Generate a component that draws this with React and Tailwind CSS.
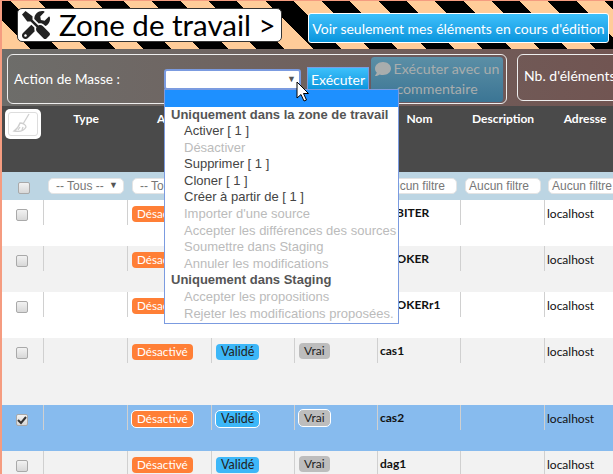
import React from 'react';
import { FaTools, FaComment } from 'react-icons/fa';

const gridCols = 'grid grid-cols-[42px_84px_84px_83px_83px_83px_84px_80px]';

const Broom = () => (
    <svg width="26" height="24" viewBox="0 0 26 24" fill="none" stroke="#cfcfcf" strokeWidth="1.3">
        <path d="M19 2 L13 12" />
        <path d="M10 11 C13 11 16 13 16 15 C14 19 9 20 4 19 C7 17 9 14 10 11 Z" />
        <path d="M8 18 L10 15 M12 18 L13 15" />
    </svg>
);

const Checkbox = ({ checked }) => (
    <div className="w-[12px] h-[12px] rounded-[2px] border border-[#a9a9a9] bg-gradient-to-b from-[#f2f2f2] to-[#d8d8d8] flex items-center justify-center">
        {checked && (
            <svg width="10" height="10" viewBox="0 0 10 10">
                <path d="M1 5 L4 8 L9 2" fill="none" stroke="#333" strokeWidth="2" />
            </svg>
        )}
    </div>
);

const Badge = ({ className, children, outlined }) => (
    <span className={`inline-block h-[16px] leading-[15px] px-[5px] rounded-[4px] ${className} ${outlined ? 'outline-1 outline-white' : ''}`}>
        {children}
    </span>
);

const Row = ({ bg, height, name, checked }) => (
    <div className={`${gridCols} ${bg} ${height} text-[12px] text-[#111]`}>
        <div className="h-[25px] border-r border-[#d0d0d0] flex justify-center pt-[9px] pr-[2px]">
            <Checkbox checked={checked} />
        </div>
        <div className="h-[25px] border-r border-[#d0d0d0]"></div>
        <div className="h-[25px] border-r border-[#d0d0d0] pl-[4px] pt-[6px] leading-none">
            <Badge className="bg-[#ff7f36] text-white text-[11.7px]" outlined={checked}>Désactivé</Badge>
        </div>
        <div className="h-[25px] border-r border-[#d0d0d0] pl-[4px] pt-[6px] leading-none">
            <Badge className="bg-[#3db7f8] text-[#222] text-[12.5px]" outlined={checked}>Validé</Badge>
        </div>
        <div className="h-[25px] border-r border-[#d0d0d0] pl-[4px] pt-[5px] leading-none">
            <Badge className="bg-[#bdbdbd] text-[#222] text-[12px]" outlined={checked}>Vrai</Badge>
        </div>
        <div className="h-[25px] border-r border-[#d0d0d0] pl-[2px] pt-[4px] font-bold text-[12px]">{name}</div>
        <div className="h-[25px] border-r border-[#d0d0d0]"></div>
        <div className="h-[25px] pl-[2px] pt-[5px]">localhost</div>
    </div>
);

const Filter = ({ label, arrow }) => (
    <div className="w-[76px] h-[16px] bg-white rounded-[5px] border border-[#e4e4e4] flex items-center justify-between pl-[7px] pr-[3px] text-[12px] text-[#777] whitespace-nowrap overflow-hidden font-['Liberation_Sans',sans-serif]">
        <span className={arrow ? '' : '-ml-[4px]'}>{label}</span>
        {arrow && <span className="text-[9px] text-[#555] pr-[2px]">▼</span>}
    </div>
);

const MenuItem = ({ on, children }) => (
    <div className={`h-[16.6px] leading-[16.6px] pl-[19px] whitespace-nowrap ${on ? 'text-[#444]' : 'text-[#bbb]'}`}>{children}</div>
);

const MenuGroup = ({ children }) => (
    <div className="h-[16.6px] leading-[16.6px] pl-[6px] font-bold text-[#555] whitespace-nowrap">{children}</div>
);

const App = () => {
    return (
        <div className="relative w-[613px] h-[474px] overflow-hidden bg-white border-l-2 border-t border-[#f59c80] font-['Lato',sans-serif]">
            {/* bandeau */}
            <div className="h-[48px] flex items-start bg-[repeating-linear-gradient(45deg,#ffcc99_0,#ffcc99_20px,#000_20px,#000_40px)]">
                <div className="flex items-center mt-[7px] ml-[15px] h-[34px] w-[265px] shrink-0 bg-white border border-[#333] rounded-[5px] pl-[4px] text-[29.5px] text-black">
                    <FaTools className="text-[#222] text-[28px] mr-[9px] shrink-0" />
                    <span className="whitespace-nowrap">Zone de travail &gt;</span>
                </div>
                <div className="mt-[12px] ml-[26px] h-[30px] w-[301px] shrink-0 rounded-[3px] border border-white bg-gradient-to-b from-[#3cc0fb] to-[#0495dd] text-white text-[14px] flex items-center justify-center whitespace-nowrap">
                    Voir seulement mes éléments en cours d'édition
                </div>
            </div>

            {/* actions de masse */}
            <div className="h-[57px] flex items-start pt-[5px] pl-[5px] bg-gradient-to-r from-[#6d6d6a] to-[#715552] text-white">
                <div className="flex items-center w-[500px] shrink-0 h-[50px] border border-[#eee] rounded-[6px] pl-[6px]">
                    <span className="w-[150px] shrink-0 text-[13.6px]">Action de Masse :</span>
                    <div className="w-[137px] shrink-0 h-[21px] bg-white border-2 border-[#7b9be0] rounded-[3px] flex items-center justify-end pr-[3px] text-[9px] text-[#555]">▼</div>
                    <div className="ml-[6px] w-[62px] shrink-0 h-[24px] bg-gradient-to-b from-[#3cc0fb] to-[#0495dd] border border-[#7b9be0] text-[14px] flex items-center justify-center">Exécuter</div>
                    <div className="ml-[1px] w-[134px] shrink-0 h-[47px] pt-[2px] rounded-[4px] border border-[#6b5a60] bg-gradient-to-b from-[#5b8fa6] to-[#3b7594] text-[#a9adad] text-[14.2px] leading-[20px] text-center">
                        <FaComment className="inline text-[16px] mr-[3px] mb-[2px]" />Exécuter avec un commentaire
                    </div>
                </div>
                <div className="ml-[10px] w-[200px] h-[47px] shrink-0 border border-[#eee] rounded-[6px] pl-[6px] pt-[10px] text-[14px] whitespace-nowrap">Nb. d'éléments</div>
            </div>

            {/* en-tete du tableau */}
            <div className={`${gridCols} h-[66px] bg-[#4a4a4a] text-white text-[12px] font-bold pt-[3px]`}>
                <div className="pl-[3px]">
                    <div className="w-[36px] h-[30px] bg-white rounded-[5px] p-[3px]">
                        <div className="w-full h-full border border-[#ddd] rounded-[3px] flex items-center justify-center"><Broom /></div>
                    </div>
                </div>
                <div className="text-center mt-[1px]">Type</div>
                <div className="text-center mt-[1px]">Actif</div>
                <div></div>
                <div></div>
                <div className="text-center mt-[1px]">Nom</div>
                <div className="text-center mt-[1px]">Description</div>
                <div className="text-center mt-[1px]">Adresse</div>
            </div>

            {/* filtres */}
            <div className={`${gridCols} h-[28px] bg-[#bcd5e3] items-center`}>
                <div className="flex justify-center pl-[1px] pt-[4px]"><Checkbox /></div>
                <div className="pl-[4px]"><Filter label="-- Tous --" arrow /></div>
                <div className="pl-[4px]"><Filter label="-- Tous --" arrow /></div>
                <div></div>
                <div></div>
                <div className="pl-[3px]"><Filter label="Aucun filtre" /></div>
                <div className="pl-[4px]"><Filter label="Aucun filtre" /></div>
                <div className="pl-[3px]"><Filter label="Aucun filtre" /></div>
            </div>

            {/* lignes */}
            <Row bg="bg-white" height="h-[46px]" name="ARBITER" />
            <Row bg="bg-[#f2f2f2]" height="h-[46px]" name="MJOKER" />
            <Row bg="bg-white" height="h-[46px]" name="MJOKERr1" />
            <Row bg="bg-[#f2f2f2]" height="h-[67px]" name="cas1" />
            <Row bg="bg-[#87bbee]" height="h-[46px]" name="cas2" checked />
            <Row bg="bg-[#f2f2f2]" height="h-[46px]" name="dag1" />

            {/* menu deroulant */}
            <div className="absolute left-[162px] top-[88px] w-[235px] h-[235px] bg-white border border-[#7b9be0] font-['Liberation_Sans',sans-serif] text-[13px]">
                <div className="h-[16.5px] bg-[#1e90ff]"></div>
                <MenuGroup>Uniquement dans la zone de travail</MenuGroup>
                <MenuItem on>Activer [ 1 ]</MenuItem>
                <MenuItem>Désactiver</MenuItem>
                <MenuItem on>Supprimer [ 1 ]</MenuItem>
                <MenuItem on>Cloner [ 1 ]</MenuItem>
                <MenuItem on>Créer à partir de [ 1 ]</MenuItem>
                <MenuItem>Importer d'une source</MenuItem>
                <MenuItem>Accepter les différences des sources</MenuItem>
                <MenuItem>Soumettre dans Staging</MenuItem>
                <MenuItem>Annuler les modifications</MenuItem>
                <MenuGroup>Uniquement dans Staging</MenuGroup>
                <MenuItem>Accepter les propositions</MenuItem>
                <MenuItem>Rejeter les modifications proposées.</MenuItem>
            </div>

            {/* curseur */}
            <svg className="absolute left-[294px] top-[80px]" width="14" height="22" viewBox="0 0 14 22">
                <path d="M1 1 L1 17 L5 13.5 L8 20 L10.5 19 L7.5 12.5 L12.5 12.5 Z" fill="#fff" stroke="#000" strokeWidth="1" />
            </svg>
        </div>
    );
}

export default App;
